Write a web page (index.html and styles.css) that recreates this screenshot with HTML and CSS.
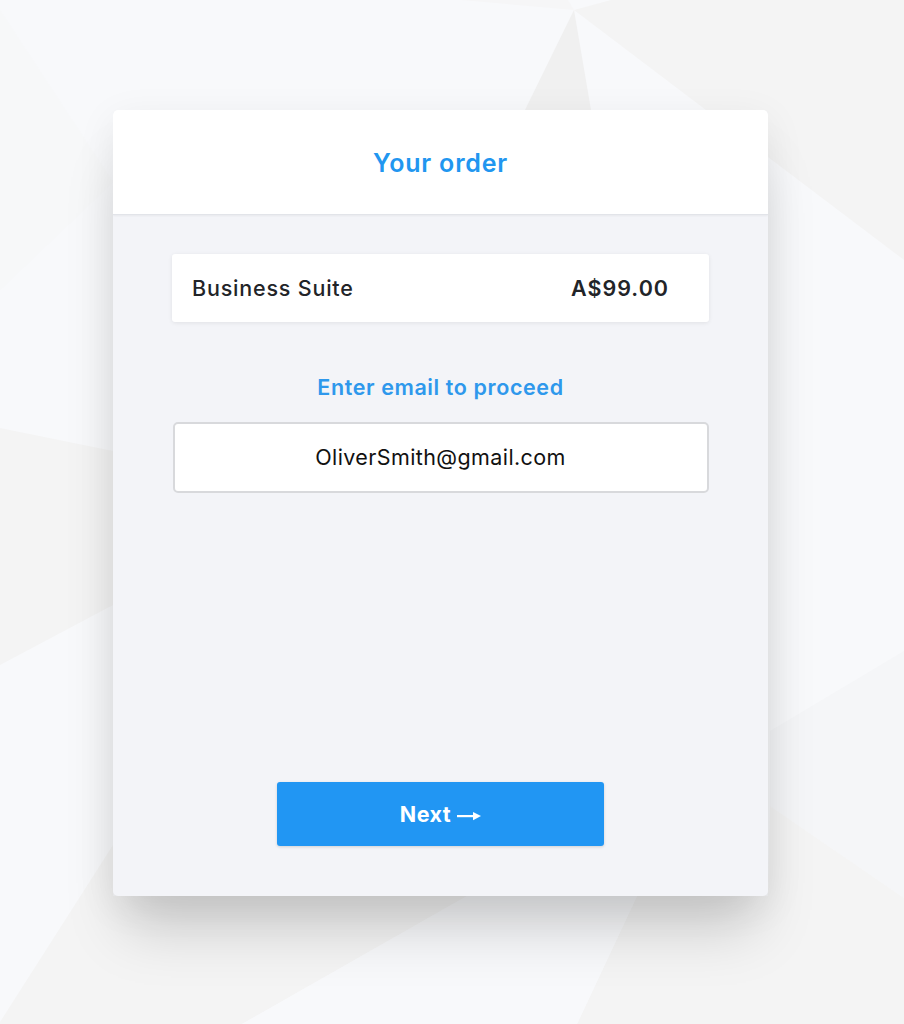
FILE: index.html
```html
<!DOCTYPE html>
<html lang="en">
<head>
<meta charset="utf-8">
<title>Your order</title>
<link rel="stylesheet" href="styles.css">
</head>
<body>
<svg class="backdrop" width="904" height="1024" viewBox="0 0 904 1024" aria-hidden="true">
  <rect width="904" height="1024" fill="#f8f9fb"/>
  <polygon points="0,10 69,115 113,182 0,290" fill="#f7f8f9"/>
  <polygon points="461,0 568,0 574,10" fill="#f6f6f7"/>
  <polygon points="574,10 611,0 904,0 904,260" fill="#f4f4f4"/>
  <polygon points="574,10 525,110 591,110" fill="#f0f0f0"/>
  <polygon points="0,428 113,451 113,605 0,665" fill="#f4f4f4"/>
  <polygon points="904,651 770,731 770,806 904,898" fill="#f5f6f8"/>
  <polygon points="770,806 904,898 904,1024 577,1024 637,896 768,896" fill="#f4f4f4"/>
  <polygon points="113,845 0,1022 0,1024 242,1024 467,896 113,896" fill="#f4f4f4"/>
  <polygon points="467,896 637,896 577,1024 242,1024" fill="#f8f9fb"/>
</svg>
<main class="page">
  <section class="card">
    <header class="card-head">
      <h1 class="title">Your order</h1>
    </header>
    <div class="card-body">
      <div class="item">
        <span class="item-name">Business Suite</span>
        <span class="item-price">A$99.00</span>
      </div>
      <p class="prompt">Enter email to proceed</p>
      <div class="email">OliverSmith@gmail.com</div>
      <div class="spacer"></div>
      <button class="next" type="button">Next
        <svg class="arrow" width="24" height="10" viewBox="0 0 24 10" aria-hidden="true">
          <rect x="0" y="4" width="18" height="2.2" fill="#fff"/>
          <polygon points="16,1 24,5.1 16,9.2" fill="#fff"/>
        </svg>
      </button>
    </div>
  </section>
</main>
</body>
</html>
```

FILE: styles.css
```css
* { box-sizing: border-box; }
html, body {
  margin: 0;
  padding: 0;
  width: 904px;
  height: 1024px;
  overflow: hidden;
  font-family: Inter, "Noto Sans", "Liberation Sans", sans-serif;
}
body { position: relative; background: #f8f9fb; }
.backdrop {
  position: absolute;
  left: 0;
  top: 0;
  z-index: 0;
  display: block;
}
.page {
  position: relative;
  z-index: 1;
  padding: 110px 0 0 113px;
}
.card {
  width: 655px;
  height: 786px;
  border-radius: 5px;
  background: #f3f4f8;
  display: flex;
  flex-direction: column;
  overflow: hidden;
  box-shadow: 0 45px 55px -12px rgba(0,0,0,0.17), 0 10px 40px rgba(0,0,0,0.07);
}
.card-head {
  height: 105px;
  background: #fff;
  border-bottom: 1px solid #e2e4e9;
  box-shadow: 0 1px 2px rgba(0,0,0,0.05);
  display: flex;
  align-items: center;
  justify-content: center;
  flex: none;
}
.title {
  margin: 0;
  font-size: 25px;
  font-weight: 600;
  color: #2196f0;
  letter-spacing: 0.8px;
  padding-top: 1px;
}
.card-body {
  flex: 1;
  display: flex;
  flex-direction: column;
  align-items: center;
  padding: 39px 59px 50px;
}
.item {
  width: 537px;
  height: 68px;
  background: #fff;
  border-radius: 3px;
  box-shadow: 0 1px 4px rgba(0,0,0,0.08);
  display: flex;
  align-items: center;
  justify-content: space-between;
  padding: 0 40px 0 20px;
  color: #222428;
  font-size: 21.5px;
  letter-spacing: 0.6px;
}
.item-name { font-weight: 500; letter-spacing: 0.8px; }
.item-price { font-weight: 600; letter-spacing: 1px; }
.prompt {
  margin: 40px 0 0;
  font-size: 21.5px;
  font-weight: 600;
  letter-spacing: 0.6px;
  color: #2e98ec;
  line-height: 50px;
}
.email {
  margin-top: 10px;
  width: 536px;
  height: 71px;
  background: #fff;
  border: 2px solid #d8d9dc;
  border-radius: 5px;
  display: flex;
  align-items: center;
  justify-content: center;
  font-size: 21.5px;
  letter-spacing: 0.4px;
  color: #111;
  padding-bottom: 2px;
}
.spacer { flex: 1; }
.next {
  width: 327px;
  height: 64px;
  border: 0;
  border-radius: 3px;
  background: #2196f3;
  box-shadow: 0 1px 3px rgba(0,0,0,0.15);
  color: #fff;
  font-family: inherit;
  font-size: 21.5px;
  letter-spacing: 0.5px;
  font-weight: 700;
  display: flex;
  align-items: center;
  justify-content: center;
  gap: 6px;
  padding: 0;
}
.arrow { margin-top: 4px; }
```
